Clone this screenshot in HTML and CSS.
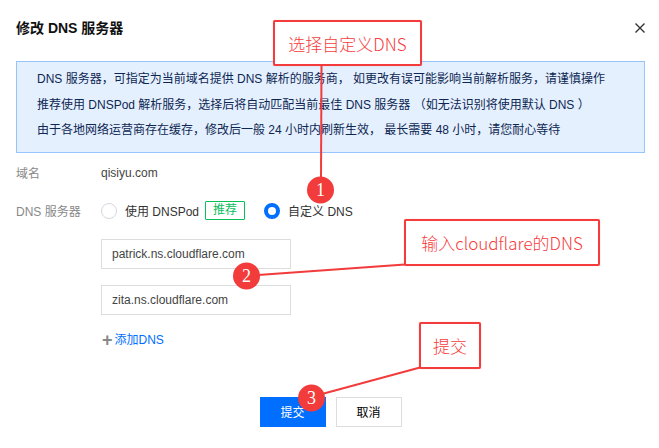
FILE: index.html
```html
<!DOCTYPE html>
<html lang="zh-CN">
<head>
<meta charset="utf-8">
<title>修改 DNS 服务器</title>
<link rel="stylesheet" href="styles.css">
</head>
<body>
<div class="dialog">
  <div class="header">
    <h1 class="title">修改 DNS 服务器</h1>
    <svg class="close" width="10" height="10" viewBox="0 0 10 10"><path d="M0.5 0.5 L9.5 9.5 M9.5 0.5 L0.5 9.5" stroke="#333" stroke-width="1.4"/></svg>
  </div>
  <div class="alert">
    <p>DNS 服务器，可指定为当前域名提供 DNS 解析的服务商， 如更改有误可能影响当前解析服务，请谨慎操作</p>
    <p>推荐使用 DNSPod 解析服务，选择后将自动匹配当前最佳 DNS 服务器 （如无法识别将使用默认 DNS ）</p>
    <p>由于各地网络运营商存在缓存，修改后一般 24 小时内刷新生效， 最长需要 48 小时，请您耐心等待</p>
  </div>
  <div class="form">
    <div class="row">
      <span class="label">域名</span>
      <span class="value">qisiyu.com</span>
    </div>
    <div class="row">
      <span class="label">DNS 服务器</span>
      <div class="radios">
        <span class="radio"></span>
        <span class="radio-text">使用 DNSPod</span>
        <span class="tag">推荐</span>
        <span class="radio checked"></span>
        <span class="radio-text">自定义 DNS</span>
      </div>
    </div>
    <div class="inputs">
      <div class="input">patrick.ns.cloudflare.com</div>
      <div class="input">zita.ns.cloudflare.com</div>
      <div class="add"><span class="plus">+</span>添加DNS</div>
    </div>
  </div>
  <div class="footer">
    <button class="btn primary">提交</button>
    <button class="btn">取消</button>
  </div>
</div>

<div class="note note1">选择自定义DNS</div>
<div class="note note2">输入cloudflare的DNS</div>
<div class="note note3">提交</div>
<svg class="marks" width="659" height="448" viewBox="0 0 659 448">
  <g stroke="#f23b3b" stroke-width="2" fill="none">
    <line x1="321.5" y1="64" x2="321" y2="180"/>
    <line x1="258" y1="275" x2="405" y2="264.5"/>
    <line x1="322" y1="394" x2="420" y2="367.5"/>
  </g>
  <g fill="#f23b3b">
    <circle cx="320.5" cy="190" r="13.5"/>
    <circle cx="246.5" cy="276" r="13.5"/>
    <circle cx="311.5" cy="398" r="13.5"/>
  </g>
  <g fill="#fff" font-family="'Liberation Serif', serif" font-size="18" text-anchor="middle">
    <text x="320.5" y="196">1</text>
    <text x="246.5" y="282">2</text>
    <text x="311.5" y="404">3</text>
  </g>
</svg>
</body>
</html>
```
FILE: styles.css
```css
* { box-sizing: border-box; }
html, body { margin: 0; padding: 0; background: #fff; }
body {
  width: 659px;
  height: 448px;
  position: relative;
  overflow: hidden;
  font-family: "Liberation Sans", "Noto Sans CJK SC", sans-serif;
  font-size: 12px;
  color: #333;
}
.dialog { padding: 18px 14px 0 16px; }
.header {
  display: flex;
  align-items: center;
  justify-content: space-between;
  height: 20px;
}
.title {
  margin: 0;
  font-size: 14px;
  font-weight: bold;
  color: #111;
  line-height: 20px;
}
.close { margin-right: 0; }
.alert {
  margin-top: 23px;
  background: #e5f0ff;
  border: 1px solid #97c5fb;
  padding: 5px 20px 8px 20px;
  color: #0d2752;
}
.alert p { margin: 0; line-height: 25.5px; white-space: nowrap; }
.form { margin-top: 10px; }
.row {
  display: flex;
  align-items: center;
  height: 20px;
  margin-bottom: 18px;
}
.label { width: 85px; color: #888; }
.value { color: #444; }
.radios { display: flex; align-items: center; }
.radio {
  width: 16px;
  height: 16px;
  border-radius: 50%;
  border: 1px solid #d5d8de;
  background: #fff;
  margin-right: 8px;
}
.radio.checked { border: 4px solid #006eff; margin-left: 19px; }
.radio-text { color: #333; }
.tag {
  margin-left: 6px;
  height: 19px;
  line-height: 17px;
  padding: 0 7px;
  border: 1px solid #0abf5b;
  color: #0abf5b;
  border-radius: 1px;
}
.inputs {
  margin-left: 85px;
  margin-top: 2px;
  display: flex;
  flex-direction: column;
  align-items: flex-start;
}
.input {
  width: 190px;
  height: 30px;
  line-height: 28px;
  border: 1px solid #ddd;
  padding-left: 10px;
  color: #444;
  margin-bottom: 16px;
}
.add {
  margin-top: -1px;
  color: #006eff;
  line-height: 20px;
  display: flex;
  align-items: center;
}
.plus {
  color: #888;
  font-size: 18px;
  font-weight: bold;
  margin: 0 2px 0 1px;
  line-height: 20px;
}
.footer {
  display: flex;
  justify-content: center;
  gap: 10px;
  margin-top: 47px;
}
.btn {
  width: 66px;
  height: 30px;
  border: 1px solid #ddd;
  background: #fff;
  color: #000;
  font-family: inherit;
  font-size: 12px;
  padding: 0;
}
.btn.primary { background: #006eff; border-color: #006eff; color: #fff; }
.note {
  position: absolute;
  border: 2px solid #f53c3c;
  border-radius: 2px;
  background: #fff;
  color: #f53c3c;
  font-family: "Noto Sans CJK SC", sans-serif;
  font-weight: 300;
  font-size: 17px;
  display: flex;
  align-items: center;
  justify-content: center;
  box-shadow: 0 0 1px rgba(245, 60, 60, 0.5);
}
.note1 { left: 273px; top: 20px; width: 149px; height: 46px; }
.note2 { left: 404px; top: 219px; width: 196px; height: 47px; }
.note3 { left: 419px; top: 322px; width: 62px; height: 47px; }
.marks { position: absolute; left: 0; top: 0; pointer-events: none; }
```
